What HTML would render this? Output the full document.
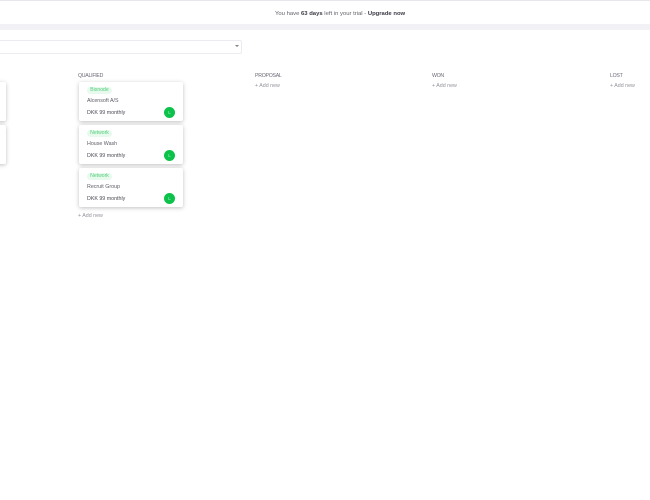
<!DOCTYPE html>
<html><head><meta charset="utf-8"><style>
html,body{margin:0;padding:0;background:#fff}
#r{position:relative;width:650px;height:500px;overflow:hidden;background:#fff;font-family:"Liberation Sans",sans-serif;color:#4a4a55}
#r div{position:absolute;white-space:nowrap}
.t{font-size:5.9px;line-height:8px;filter:blur(.3px)}
.card{width:104px;height:39px;background:#fff;border-radius:2px;box-shadow:0 1px 4px rgba(0,0,0,.25)}
.tag{left:8px;top:4px;width:25px;height:7px;margin-top:.5px;line-height:7.6px;text-align:center;border-radius:4px;background:#e8f9ee;color:#4fce78;font-size:5.1px;padding-top:.5px;filter:blur(.2px)}
.nm{left:8px;top:15px;font-size:5.3px;line-height:8px;color:#5c5c66;filter:blur(.3px)}
.pr{left:8px;top:27px;font-size:5.3px;line-height:8px;color:#4a4a54;filter:blur(.3px)}
.av{left:85px;top:25px;width:11px;height:11px;border-radius:50%;background:#0cc24a;color:#bfeed0;font-size:4.5px;line-height:11px;text-align:center}
.h{font-size:5.2px;letter-spacing:-.25px;line-height:8px;color:#6a6a76;top:72px;filter:blur(.3px)}
.ad{font-size:5.3px;line-height:8px;color:#92929c;filter:blur(.3px)}
</style></head><body><div id="r">
<div style="left:0;top:0;width:650px;height:1px;background:#e8e8ec"></div>
<div style="left:0;top:24px;width:650px;height:6px;background:#f2f2f6"></div>
<div class="t" style="left:275px;top:9.5px;color:#62626c">You have <b style="color:#3a3a44">63 days</b> left in your trial - <b style="color:#3a3a44">Upgrade now</b></div>
<div style="left:-4px;top:40px;width:244px;height:11.5px;border:1px solid #ececf0;border-radius:2px;background:#fff"></div>
<div style="left:235px;top:45px;width:0;height:0;border-left:2px solid transparent;border-right:2px solid transparent;border-top:2px solid #808088"></div>

<div class="card" style="left:-98px;top:82px"></div>
<div class="card" style="left:-98px;top:125px"></div>

<div class="h" style="left:78px">QUALIFIED</div>
<div class="card" style="left:79px;top:82px"><div class="tag">Bisnode</div><div class="nm">Alcensoft A/S</div><div class="pr">DKK 99 monthly</div><div class="av">L</div></div>
<div class="card" style="left:79px;top:125px"><div class="tag">Network</div><div class="nm">House Wash</div><div class="pr">DKK 99 monthly</div><div class="av">L</div></div>
<div class="card" style="left:79px;top:168px"><div class="tag">Network</div><div class="nm">Recruit Group</div><div class="pr">DKK 99 monthly</div><div class="av">L</div></div>
<div class="ad" style="left:78px;top:212px">+ Add new</div>

<div class="h" style="left:255px">PROPOSAL</div>
<div class="ad" style="left:255px;top:82px">+ Add new</div>
<div class="h" style="left:432px">WON</div>
<div class="ad" style="left:432px;top:82px">+ Add new</div>
<div class="h" style="left:610px">LOST</div>
<div class="ad" style="left:610px;top:82px">+ Add new</div>
</div></body></html>
